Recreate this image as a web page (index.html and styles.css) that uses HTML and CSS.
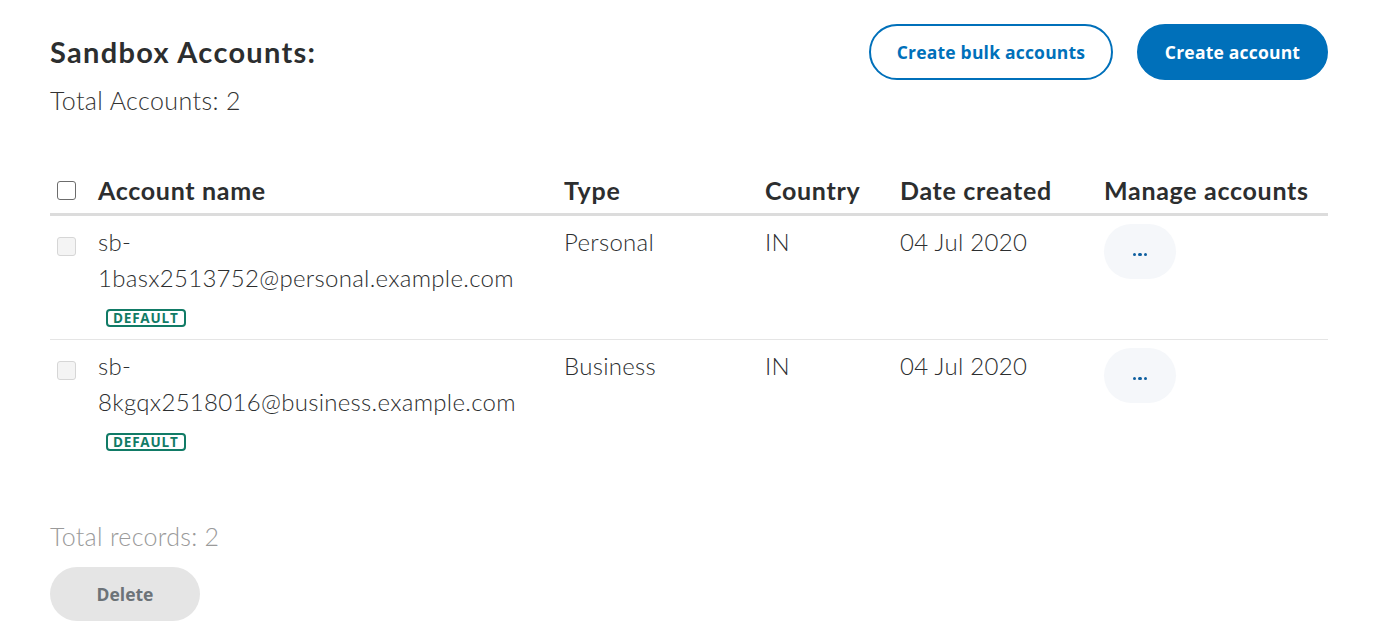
FILE: index.html
```html
<!DOCTYPE html>
<html>
<head>
<meta charset="utf-8">
<link rel="stylesheet" href="styles.css">
</head>
<body>
<div class="page">
  <div class="top">
    <div class="heading">
      <h1 class="title">Sandbox Accounts:</h1>
      <div class="total">Total Accounts: 2</div>
    </div>
    <div class="actions">
      <button class="btn btn-outline">Create bulk accounts</button>
      <button class="btn btn-primary">Create account</button>
    </div>
  </div>

  <table class="accounts">
    <thead>
      <tr>
        <th class="c-check"><span class="box"></span></th>
        <th class="c-name">Account name</th>
        <th class="c-type">Type</th>
        <th class="c-country">Country</th>
        <th class="c-date">Date created</th>
        <th class="c-manage">Manage accounts</th>
      </tr>
    </thead>
    <tbody>
      <tr>
        <td class="c-check"><span class="box disabled"></span></td>
        <td class="c-name">sb-<br>1basx2513752@personal.example.com<div class="badge">DEFAULT</div></td>
        <td>Personal</td>
        <td>IN</td>
        <td>04 Jul 2020</td>
        <td><button class="more"><span></span><span></span><span></span></button></td>
      </tr>
      <tr class="last">
        <td class="c-check"><span class="box disabled"></span></td>
        <td class="c-name">sb-<br>8kgqx2518016@business.example.com<div class="badge">DEFAULT</div></td>
        <td>Business</td>
        <td>IN</td>
        <td>04 Jul 2020</td>
        <td><button class="more"><span></span><span></span><span></span></button></td>
      </tr>
    </tbody>
  </table>

  <div class="records">Total records: 2</div>
  <button class="btn btn-delete">Delete</button>
</div>
</body>
</html>
```

FILE: styles.css
```css
* { box-sizing: border-box; }
html, body { margin: 0; padding: 0; background: #fff; }
body {
  font-family: Lato, "Open Sans", sans-serif;
  color: #2c2e2f;
}
.page {
  width: 1278px;
  margin-left: 50px;
  padding-top: 24px;
}
.top {
  display: flex;
  justify-content: space-between;
  align-items: flex-start;
}
.title {
  margin: 10px 0 0 0;
  font-size: 29px;
  font-weight: 700;
  line-height: 36px;
  letter-spacing: 1.3px;
  color: #2c2e2f;
}
.total {
  margin-top: 14px;
  font-size: 25px;
  font-weight: 300;
  line-height: 32px;
  letter-spacing: 0.4px;
  color: #333;
}
.actions {
  display: flex;
  gap: 24px;
}
.btn {
  font-family: "Open Sans", sans-serif;
  font-weight: 700;
  font-size: 17.5px;
  height: 56px;
  border-radius: 28px;
  cursor: pointer;
}
.btn-outline {
  width: 244px;
  background: #fff;
  color: #0070ba;
  border: 2px solid #0070ba;
  letter-spacing: 0.2px;
}
.btn-primary {
  width: 191px;
  background: #0070ba;
  color: #fff;
  border: 2px solid #0070ba;
  letter-spacing: 0.2px;
}
.accounts {
  margin-top: 49px;
  width: 100%;
  border-collapse: collapse;
  table-layout: fixed;
}
.accounts th {
  text-align: left;
  font-size: 25px;
  font-weight: 700;
  line-height: 32px;
  letter-spacing: 0.7px;
  padding: 9px 0 7px 0;
  border-bottom: 3px solid #dcdcdc;
  vertical-align: middle;
}
.accounts td {
  font-size: 24px;
  font-weight: 300;
  line-height: 36px;
  letter-spacing: 0.3px;
  padding: 8px 0 12px 0;
  vertical-align: top;
  border-bottom: 1px solid #e5e5e5;
  color: #2c2e2f;
}
.accounts tr.last td { border-bottom: none; }
.c-check { width: 48px; }
.c-name { width: 466px; }
.c-type { width: 201px; }
.c-country { width: 135px; }
.c-date { width: 204px; }
th.c-manage { white-space: nowrap; }
th .box { margin-top: 1px; }
.box {
  display: block;
  width: 19px;
  height: 19px;
  margin-left: 7px;
  border: 1.5px solid #6c6c6c;
  border-radius: 3px;
  background: #fff;
}
td .box {
  margin-top: 13px;
  border: 1px solid #d6d6d6;
  background: #f4f4f4;
}
.badge {
  display: block;
  width: max-content;
  margin: 13px 0 0 8px;
  height: 18px;
  padding: 0 5px;
  border: 2px solid #117b66;
  border-radius: 4px;
  font-family: "Open Sans", sans-serif;
  font-size: 13.5px;
  font-weight: 700;
  line-height: 14px;
  color: #117b66;
  letter-spacing: 0.8px;
}
.more {
  display: flex;
  justify-content: center;
  align-items: center;
  gap: 2px;
  width: 72px;
  height: 55px;
  margin-top: 0;
  padding: 6px 0 0 0;
  border: none;
  border-radius: 28px;
  background: #f5f7fa;
  cursor: pointer;
}
.more span {
  width: 3.5px;
  height: 3.5px;
  border-radius: 50%;
  background: #0e5fa0;
}
.records {
  margin-top: 57px;
  font-size: 25px;
  font-weight: 300;
  line-height: 32px;
  letter-spacing: 0.3px;
  color: #9a9a9a;
}
.btn-delete {
  margin-top: 15px;
  width: 150px;
  height: 54px;
  border-radius: 27px;
  border: none;
  background: #e5e5e5;
  color: #6c7378;
  font-size: 17.5px;
}
```
